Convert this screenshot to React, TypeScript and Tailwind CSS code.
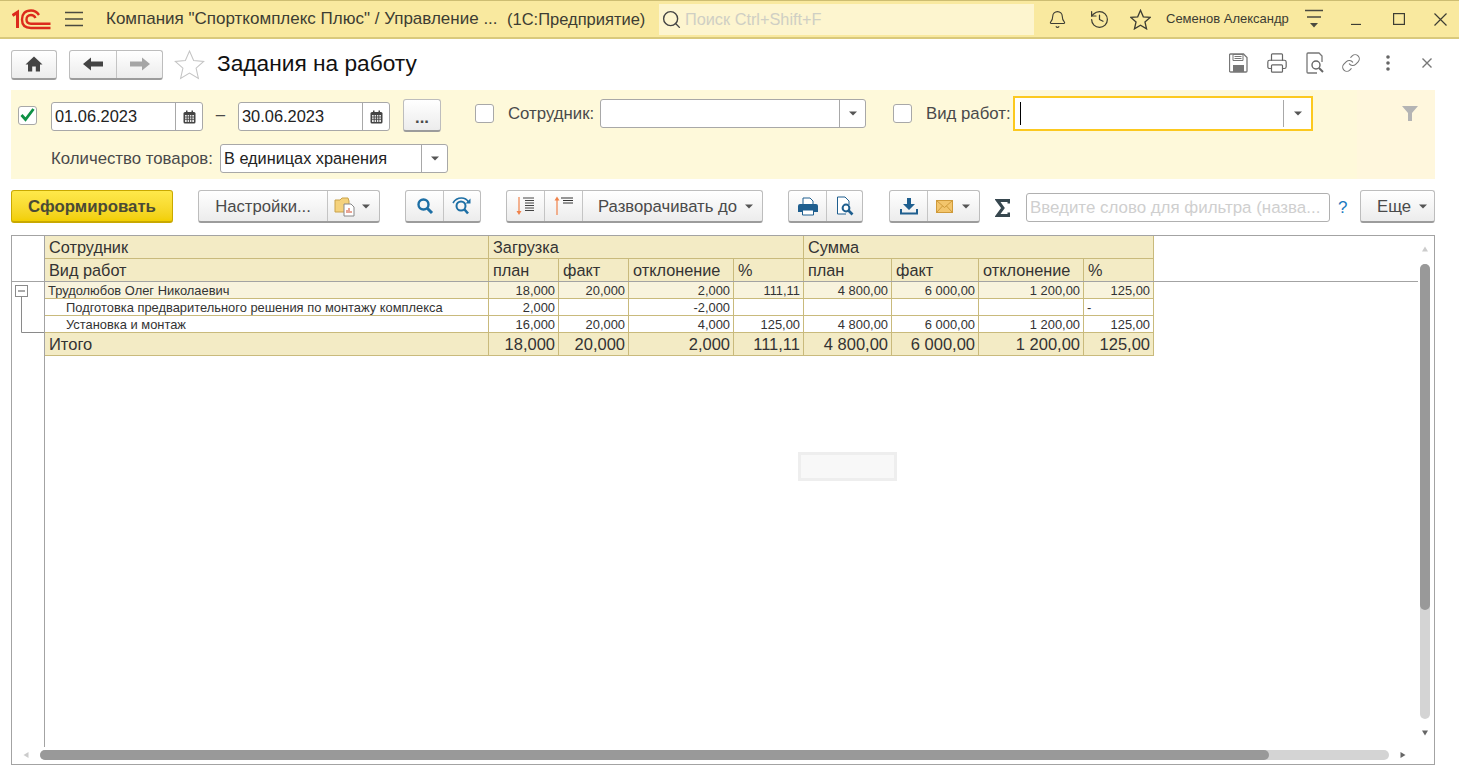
import React from "react";
import { Bell, History, Link, Printer, Search } from "lucide-react";

const Caret = ({ c = "#555" }: { c?: string }) => (
  <svg width="8" height="5" viewBox="0 0 8 5" className="shrink-0"><path d="M0 0.5h8L4 4.5z" fill={c} /></svg>
);

const Cal = () => (
  <svg width="13" height="14" viewBox="0 0 13 14" className="shrink-0">
    <rect x="0.5" y="2" width="12" height="11.5" rx="1.5" fill="#444" />
    <rect x="3" y="0.5" width="1.5" height="3" fill="#444" />
    <rect x="8.5" y="0.5" width="1.5" height="3" fill="#444" />
    <rect x="2" y="5" width="9" height="7" fill="#e8e8e8" />
    <path d="M2 7h9M2 9.3h9M4.2 5v7M6.5 5v7M8.8 5v7" stroke="#444" strokeWidth="0.9" />
  </svg>
);

const Checkbox = ({ checked, className }: { checked?: boolean; className: string }) => (
  <div className={`relative shrink-0 w-[19px] h-[19px] bg-white border border-[#a8a8a8] rounded-[3px] ${className}`}>
    {checked && (
      <svg width="17" height="16" viewBox="0 0 17 16" className="absolute left-[0px] top-[0px]">
        <path d="M2.5 8l4 4.5L14.5 2" fill="none" stroke="#0f9145" strokeWidth="2.8" />
      </svg>
    )}
  </div>
);

const StarShape = ({ size, stroke, sw, className }: { size: number; stroke: string; sw: number; className: string }) => (
  <svg width={size} height={size} viewBox="0 0 24 24" className={className}>
    <path d="M12 1.5l3.2 7.4 7.8.7-5.9 5.2 1.8 7.9L12 18.6l-6.9 4.1 1.8-7.9L1 9.6l7.8-.7z" fill="none" stroke={stroke} strokeWidth={sw} />
  </svg>
);

const btn = "flex h-[33px] rounded-[3px] border border-[#bdbdbd] border-b-[#9c9c9c] border-b-2 bg-gradient-to-b from-white to-[#ececec] text-[#4a4a4a] text-[16.7px] shrink-0";

const SmallSearch = () => (
  <svg width="18" height="18" viewBox="0 0 18 18"><circle cx="7.5" cy="7.5" r="5" fill="none" stroke="#1d6fa5" strokeWidth="2.4" /><path d="M11.5 11.5L16 16" stroke="#1d6fa5" strokeWidth="3" /></svg>
);

const Rows: { name: string; indent: boolean; kind: "g" | "d" | "t"; v: string[] }[] = [
  { name: "Трудолюбов Олег Николаевич", indent: false, kind: "g", v: ["18,000", "20,000", "2,000", "111,11", "4 800,00", "6 000,00", "1 200,00", "125,00"] },
  { name: "Подготовка предварительного решения по монтажу комплекса", indent: true, kind: "d", v: ["2,000", "", "-2,000", "", "", "", "", "-"] },
  { name: "Установка и монтаж", indent: true, kind: "d", v: ["16,000", "20,000", "4,000", "125,00", "4 800,00", "6 000,00", "1 200,00", "125,00"] },
  { name: "Итого", indent: false, kind: "t", v: ["18,000", "20,000", "2,000", "111,11", "4 800,00", "6 000,00", "1 200,00", "125,00"] },
];

const cols = "grid grid-cols-[444px_70px_70px_105px_70px_88px_87px_105px_70px] w-[1109px]";
const hcell = "border-r border-[#c9ba7c] pl-[4px] flex items-center bg-[#f3ebc5] text-[#333] text-[16.3px] leading-none";

export default function App() {
  return (
    <div className="w-[1459px] h-[781px] overflow-hidden bg-white flex flex-col [font-family:'Liberation_Sans',Arial,sans-serif]">
      {/* title bar */}
      <div className="h-[39px] shrink-0 flex items-center bg-[#f9e99f] border-t border-t-[#cdbd72] border-b-2 border-b-[#d9c97c] text-[#3d3d33]">
        <svg width="39" height="21" viewBox="0 0 39 21" className="ml-[12px] shrink-0">
          <path d="M0.5 6.5L5.5 3.2V19" fill="none" stroke="#dc2a1c" strokeWidth="3" />
          <path d="M27 6C25 3 22 1.5 19 1.5C13 1.5 10 5 10 10.5C10 16 13 19 19 19H38.5" fill="none" stroke="#dc2a1c" strokeWidth="2.4" />
          <path d="M23.5 9C22.5 7 21 6 19 6C16 6 14.5 8 14.5 10.5C14.5 13 16 14.7 19 14.7H38.5" fill="none" stroke="#dc2a1c" strokeWidth="2.4" />
        </svg>
        <svg width="18" height="16" viewBox="0 0 18 16" className="ml-[14px] shrink-0"><path d="M0 1.5h18M0 8h18M0 14.5h18" stroke="#4a4a40" strokeWidth="1.3" /></svg>
        <span className="ml-[23px] w-[401px] text-[17px] whitespace-nowrap overflow-hidden">Компания "Спорткомплекс Плюс" / Управление ...</span>
        <span className="text-[16.5px] whitespace-nowrap w-[152px]">(1С:Предприятие)</span>
        <div className="w-[375px] h-[31px] bg-[#fdf5cf] flex items-center shrink-0">
          <Search size={21} strokeWidth={1.6} color="#444" className="ml-[2px] shrink-0" />
          <span className="ml-[3px] text-[16.3px] text-[#cfcfc4] whitespace-nowrap">Поиск Ctrl+Shift+F</span>
        </div>
        <Bell size={19} strokeWidth={1.4} className="ml-[14px] shrink-0" />
        <History size={21} strokeWidth={1.4} className="ml-[22px] shrink-0" />
        <StarShape size={21} stroke="#3d3d33" sw={1.5} className="ml-[20px] shrink-0" />
        <span className="ml-[15px] w-[123px] text-[13px] whitespace-nowrap">Семенов Александр</span>
        <svg width="18" height="20" viewBox="0 0 18 20" className="ml-[16px] shrink-0"><path d="M0 1.5h18M2 8h14" stroke="#4a4a40" strokeWidth="1.3" /><path d="M5 14h8l-4 4.5z" fill="#4a4a40" /></svg>
        <svg width="12" height="12" viewBox="0 0 12 12" className="ml-[27px] shrink-0"><path d="M1 11.500h10" stroke="#3d3d33" strokeWidth="1.3" /></svg>
        <svg width="12" height="12" viewBox="0 0 12 12" className="ml-[31px] shrink-0"><rect x="0.6" y="0.6" width="10.8" height="10.8" fill="none" stroke="#3d3d33" strokeWidth="1.2" /></svg>
        <svg width="13" height="13" viewBox="0 0 13 13" className="ml-[29px] shrink-0"><path d="M0.5 0.5l12 12M12.5 0.5l-12 12" stroke="#3d3d33" strokeWidth="1.2" /></svg>
      </div>

      {/* page header */}
      <div className="h-[51px] shrink-0 flex items-center pl-[11px]">
        <div className={`${btn} !h-[30px] w-[46px] items-center justify-center`}>
          <svg width="18" height="16" viewBox="0 0 18 16"><path d="M9 0.5L0.5 8.5H3V15.5H7.2V10.5H10.8V15.5H15V8.5H17.5z" fill="#444" /></svg>
        </div>
        <div className={`${btn} !h-[30px] w-[94px] ml-[12px]`}>
          <div className="w-[47px] flex items-center justify-center border-r border-[#c4c4c4]">
            <svg width="20" height="14" viewBox="0 0 20 14"><path d="M0 7L8 0.5V4.5H20V9.5H8V13.5z" fill="#444" /></svg>
          </div>
          <div className="flex-1 flex items-center justify-center">
            <svg width="20" height="14" viewBox="0 0 20 14"><path d="M20 7L12 0.5V4.5H0V9.5H12V13.5z" fill="#a5a5a5" /></svg>
          </div>
        </div>
        <StarShape size={31} stroke="#c4c4c4" sw={0.8} className="ml-[11px] shrink-0" />
        <span className="ml-[12px] mb-[2px] text-[22.7px] text-[#111] whitespace-nowrap w-[1012px]">Задания на работу</span>
        <svg width="19" height="20" viewBox="0 0 19 20" className="mb-[4px] shrink-0"><path d="M1.5 1h13l3.5 3.5V18a1 1 0 0 1-1 1H1.5a1 1 0 0 1-1-1V2a1 1 0 0 1 1-1z" fill="none" stroke="#777" strokeWidth="1.3" /><path d="M4 1.5h10v6H4zM5.5 3.5h7M5.5 5.5h7" fill="none" stroke="#777" /><path d="M4 12h11v7H4z" fill="#777" /></svg>
        <Printer size={22} strokeWidth={1.3} color="#666" className="ml-[18px] mb-[4px] shrink-0" />
        <svg width="20" height="22" viewBox="0 0 20 22" className="ml-[18px] mb-[4px] shrink-0"><path d="M11 21H2a1 1 0 0 1-1-1V2a1 1 0 0 1 1-1h11l3 3v6" fill="none" stroke="#777" strokeWidth="1.3" /><circle cx="10" cy="13" r="4" fill="none" stroke="#666" strokeWidth="1.4" /><path d="M13 16l4 4" stroke="#666" strokeWidth="2" /></svg>
        <Link size={20} strokeWidth={1.3} color="#777" className="ml-[15px] mb-[4px] shrink-0" />
        <svg width="4" height="16" viewBox="0 0 4 16" className="ml-[25px] mb-[4px] shrink-0"><circle cx="2" cy="2" r="1.8" fill="#666" /><circle cx="2" cy="8" r="1.8" fill="#666" /><circle cx="2" cy="14" r="1.8" fill="#666" /></svg>
        <svg width="10" height="10" viewBox="0 0 10 10" className="ml-[32px] mb-[4px] shrink-0"><path d="M0.5 0.5l9 9M9.5 0.5l-9 9" stroke="#777" strokeWidth="1.4" /></svg>
      </div>

      {/* filter panel */}
      <div className="ml-[11px] w-[1424px] h-[89px] shrink-0 flex bg-[#fef9da] text-[16.8px] text-[#4a4a4a]">
        <div className="flex-1 min-w-0 flex flex-col">
          <div className="h-[42px] flex items-start">
            <Checkbox checked className="ml-[7px] mt-[16px]" />
            <div className="ml-[14px] mt-[12px] w-[152px] h-[29px] bg-white border border-[#a8a8a8] rounded-[3px] flex items-stretch shrink-0 text-[16.4px]">
              <span className="flex-1 pl-[3px] flex items-center text-[#222]">01.06.2023</span>
              <span className="w-[27px] border-l border-[#a8a8a8] flex items-center justify-center"><Cal /></span>
            </div>
            <span className="w-[35px] mt-[17px] text-center leading-none">–</span>
            <div className="mt-[12px] w-[152px] h-[29px] bg-white border border-[#a8a8a8] rounded-[3px] flex items-stretch shrink-0 text-[16.4px]">
              <span className="flex-1 pl-[3px] flex items-center text-[#222]">30.06.2023</span>
              <span className="w-[27px] border-l border-[#a8a8a8] flex items-center justify-center"><Cal /></span>
            </div>
            <div className={`${btn} w-[38px] ml-[13px] mt-[9px] items-center justify-center pt-[5px] font-bold text-[15px]`}>...</div>
            <Checkbox className="ml-[34px] mt-[14px]" />
            <span className="ml-[14px] w-[92px] mt-[14px] leading-[19px] whitespace-nowrap">Сотрудник:</span>
            <div className="w-[266px] h-[29px] mt-[9px] bg-white border border-[#a8a8a8] rounded-[3px] flex justify-end shrink-0">
              <span className="w-[26px] border-l border-[#a8a8a8] flex items-center justify-center"><Caret /></span>
            </div>
            <Checkbox className="ml-[27px] mt-[14px]" />
            <span className="ml-[14px] w-[87px] mt-[14px] leading-[19px] whitespace-nowrap">Вид работ:</span>
            <div className="w-[300px] h-[35px] mt-[6px] bg-white border-2 border-[#fcc91f] flex items-center shrink-0">
              <span className="ml-[5px] w-[1px] h-[23px] bg-black"></span>
              <span className="ml-auto w-[28px] h-[27px] border-l border-[#a8a8a8] flex items-center justify-center"><Caret /></span>
            </div>
          </div>
          <div className="flex items-start mt-[12px]">
            <span className="ml-[40px] w-[169px] mt-[5px] leading-[19px] whitespace-nowrap">Количество товаров:</span>
            <div className="w-[228px] h-[29px] bg-white border border-[#a8a8a8] rounded-[3px] flex items-stretch shrink-0 text-[16.3px]">
              <span className="flex-1 pl-[3px] flex items-center text-[#222]">В единицах хранения</span>
              <span className="w-[26px] border-l border-[#a8a8a8] flex items-center justify-center"><Caret /></span>
            </div>
          </div>
        </div>
        <div className="w-[78px] shrink-0 bg-[#fff7dd] pl-[45px] pt-[16px]">
          <svg width="16" height="15" viewBox="0 0 16 15"><path d="M0 0h16L10 7v8H6V7z" fill="#b4b4b4" /></svg>
        </div>
      </div>

      {/* toolbar */}
      <div className="h-[33px] mt-[11px] shrink-0 ml-[11px] w-[1424px] flex items-stretch">
        <div className="w-[162px] shrink-0 rounded-[3px] border border-[#c9a900] border-b-2 bg-gradient-to-b from-[#ffe94a] to-[#f2cf00] flex items-center justify-center pt-[1px] text-[16.8px] font-bold text-[#4a4a35]">Сформировать</div>
        <div className={`${btn} w-[182px] ml-[25px]`}>
          <div className="w-[129px] flex items-center justify-center pt-[1px] border-r border-[#c4c4c4]">Настройки...</div>
          <div className="flex-1 flex items-center pl-[6px] gap-[6px]">
            <svg width="22" height="21" viewBox="0 0 22 21"><path d="M1 4h5l2-2h6l1 3v11H1z" fill="#f5d27c" stroke="#c9a24a" /><path d="M10 8h7l3 3v9H10z" fill="#fff" stroke="#888" /><path d="M13 17v-3M15 17v-5M17 17v-2" stroke="#d04a2a" strokeWidth="1" /></svg>
            <Caret />
          </div>
        </div>
        <div className={`${btn} w-[76px] ml-[25px]`}>
          <div className="w-[38px] flex items-center justify-center border-r border-[#c4c4c4]"><SmallSearch /></div>
          <div className="flex-1 flex items-center justify-center">
            <svg width="20" height="18" viewBox="0 0 20 18"><circle cx="9" cy="9" r="4.5" fill="none" stroke="#1d6fa5" strokeWidth="2" /><path d="M12.5 12.5L16 16.5" stroke="#1d6fa5" strokeWidth="2.6" /><path d="M1 6C3 2.5 6 1 9.5 1C12.5 1 15 2.5 16.5 5" fill="none" stroke="#1d6fa5" strokeWidth="1.6" /><path d="M18.5 1.5v5h-5z" fill="#1d6fa5" /></svg>
          </div>
        </div>
        <div className={`${btn} w-[257px] ml-[25px]`}>
          <div className="w-[38px] flex items-center justify-center border-r border-[#c4c4c4]">
            <svg width="20" height="20" viewBox="0 0 20 20"><path d="M3 1v16" stroke="#f0824a" strokeWidth="1.2" /><path d="M0.5 15h5L3 19z" fill="#f0824a" /><path d="M7 2h11M9 4.5h9M9 7h9M9 9.5h9M9 12h9M9 14.5h9" stroke="#444" strokeWidth="1" /></svg>
          </div>
          <div className="w-[38px] flex items-center justify-center border-r border-[#c4c4c4]">
            <svg width="20" height="20" viewBox="0 0 20 20"><path d="M3 3v16" stroke="#f0824a" strokeWidth="1.2" /><path d="M0.5 4.5h5L3 0.5z" fill="#f0824a" /><path d="M7 2h12M9 4.5h10M9 7h10" stroke="#333" strokeWidth="1.1" /></svg>
          </div>
          <div className="flex-1 flex items-center pl-[15px] pt-[1px] gap-[8px] whitespace-nowrap">Разворачивать до <Caret /></div>
        </div>
        <div className={`${btn} w-[75px] ml-[25px]`}>
          <div className="w-[38px] flex items-center justify-center border-r border-[#c4c4c4]">
            <svg width="20" height="19" viewBox="0 0 20 19"><path d="M5 1h7l3 3v4H5z" fill="#fff" stroke="#1f5f8f" /><path d="M2 7h16a2 2 0 0 1 2 2v6h-4v-2H4v2H0V9a2 2 0 0 1 2-2z" fill="#1f5f8f" /><path d="M4.5 13h11v5h-11z" fill="#fff" stroke="#1f5f8f" /></svg>
          </div>
          <div className="flex-1 flex items-center justify-center">
            <svg width="18" height="20" viewBox="0 0 18 20"><path d="M10 18H1.5V1H9l4 4v4" fill="#fff" stroke="#1f5f8f" /><circle cx="10" cy="12" r="3.4" fill="none" stroke="#1f5f8f" strokeWidth="2" /><path d="M12.5 14.5l4 4" stroke="#1f5f8f" strokeWidth="2.6" /></svg>
          </div>
        </div>
        <div className={`${btn} w-[91px] ml-[26px]`}>
          <div className="w-[38px] flex items-center justify-center border-r border-[#c4c4c4]">
            <svg width="18" height="17" viewBox="0 0 18 17"><path d="M7 0h4v6h4l-6 6-6-6h4z" fill="#1f5f8f" /><path d="M1 11v4.5h16V11" fill="none" stroke="#1f5f8f" strokeWidth="2" /></svg>
          </div>
          <div className="flex-1 flex items-center pl-[8px] gap-[9px]">
            <svg width="17" height="13" viewBox="0 0 17 13"><rect x="0.5" y="0.5" width="16" height="12" fill="#f3c56c" stroke="#cf9a3a" /><path d="M0.5 0.5l8 7 8-7M0.5 12.5l6-6.5M16.5 12.5l-6-6.5" fill="none" stroke="#cf9a3a" /></svg>
            <Caret />
          </div>
        </div>
        <svg width="15" height="18" viewBox="0 0 15 18" className="ml-[15px] mt-[9px] shrink-0"><path d="M14 4.500V1.500H2.500L8 9l-5.500 7.500H14V13.500" fill="none" stroke="#37474f" strokeWidth="3" /></svg>
        <div className="w-[304px] h-[29px] mt-[3px] ml-[16px] bg-white border border-[#b0b0b0] rounded-[3px] flex items-center pl-[3px] text-[16.9px] text-[#cfcfcf] whitespace-nowrap overflow-hidden shrink-0">Введите слово для фильтра (назва...</div>
        <span className="ml-[8px] w-[14px] mt-[8px] text-[17px] leading-[19px] text-[#1b7ac0] shrink-0">?</span>
        <div className={`${btn} w-[75px] ml-[8px] items-center pl-[16px] pt-[1px] gap-[8px]`}>Еще <Caret /></div>
      </div>

      {/* report */}
      <div className="relative mt-[12px] ml-[11px] w-[1424px] h-[530px] shrink-0 border border-[#a3a3a3] flex flex-col overflow-hidden">
        <div className="flex shrink-0 mr-[16px] border-b border-[#a3a3a3]">
          <div className="w-[33px] border-r border-[#a3a3a3] shrink-0"></div>
          <div className={cols}>
            <div className={`${hcell} h-[23px] border-b`}>Сотрудник</div>
            <div className={`${hcell} h-[23px] border-b col-span-4`}>Загрузка</div>
            <div className={`${hcell} h-[23px] border-b col-span-4`}>Сумма</div>
            {["Вид работ", "план", "факт", "отклонение", "%", "план", "факт", "отклонение", "%"].map((t, i) => (
              <div key={i} className={`${hcell} h-[22px]`}>{t}</div>
            ))}
          </div>
        </div>
        <div className="flex-1 flex min-h-0 pb-[17px]">
          <div className="w-[33px] border-r border-[#a3a3a3] shrink-0">
            <svg width="32" height="51" viewBox="0 0 32 51">
              <rect x="3.5" y="3.5" width="12" height="11" fill="#fff" stroke="#8a8a8a" />
              <path d="M6 9h7" stroke="#555" />
              <path d="M9.5 15v35.500H32" fill="none" stroke="#8a8a8a" />
            </svg>
          </div>
          <div className={`${cols} content-start`}>
            {Rows.map((r) => {
              const base = r.kind === "t" ? "h-[23px] bg-[#f3ebc5] text-[16.5px]" : r.kind === "g" ? "h-[17px] pt-[1px] bg-[#f8f3dd] text-[12.9px]" : "h-[17px] pt-[1px] bg-white text-[12.9px]";
              return (
                <React.Fragment key={r.name}>
                  <div className={`${base} border-r border-b border-[#c9ba7c] flex items-center text-[#333] whitespace-nowrap ${r.indent ? "pl-[21px]" : r.kind === "t" ? "pl-[4px]" : "pl-[3px]"}`}>{r.name}</div>
                  {r.v.map((x, i) => (
                    <div key={i} className={`${base} border-r border-b border-[#c9ba7c] flex items-center text-[#333] whitespace-nowrap ${x === "-" ? "pl-[3px]" : "justify-end pr-[3px]"}`}>{x}</div>
                  ))}
                </React.Fragment>
              );
            })}
          </div>
        </div>

        {/* scrollbars */}
        <svg width="6" height="6" viewBox="0 0 6 6" className="absolute left-[1410px] top-[10px]"><path d="M3 0.500L6 5.500H0z" fill="#ccc" /></svg>
        <div className="absolute left-[1408px] top-[28px] w-[10px] h-[455px] rounded-[5px] bg-[#d4d4d4]">
          <div className="w-[10px] h-[346px] rounded-[5px] bg-[#999]"></div>
        </div>
        <svg width="6" height="6" viewBox="0 0 6 6" className="absolute left-[1410px] top-[494px]"><path d="M3 5.500L6 0.500H0z" fill="#666" /></svg>
        <svg width="6" height="6" viewBox="0 0 6 6" className="absolute left-[11px] top-[516px]"><path d="M0.500 3L5.500 0v6z" fill="#ccc" /></svg>
        <div className="absolute left-[28px] top-[514px] w-[1349px] h-[10px] rounded-[5px] bg-[#d4d4d4]">
          <div className="h-[10px] w-[1229px] rounded-[5px] bg-[#999]"></div>
        </div>
        <svg width="6" height="6" viewBox="0 0 6 6" className="absolute left-[1388px] top-[516px]"><path d="M5.500 3L0.500 0v6z" fill="#666" /></svg>

        {/* loading placeholder */}
        <div className="absolute left-[786px] top-[216px] w-[99px] h-[29px] bg-[#f8f8f8] border border-white outline-[3px] outline-[#eeeeee] -outline-offset-[3px]"></div>
      </div>
    </div>
  );
}
